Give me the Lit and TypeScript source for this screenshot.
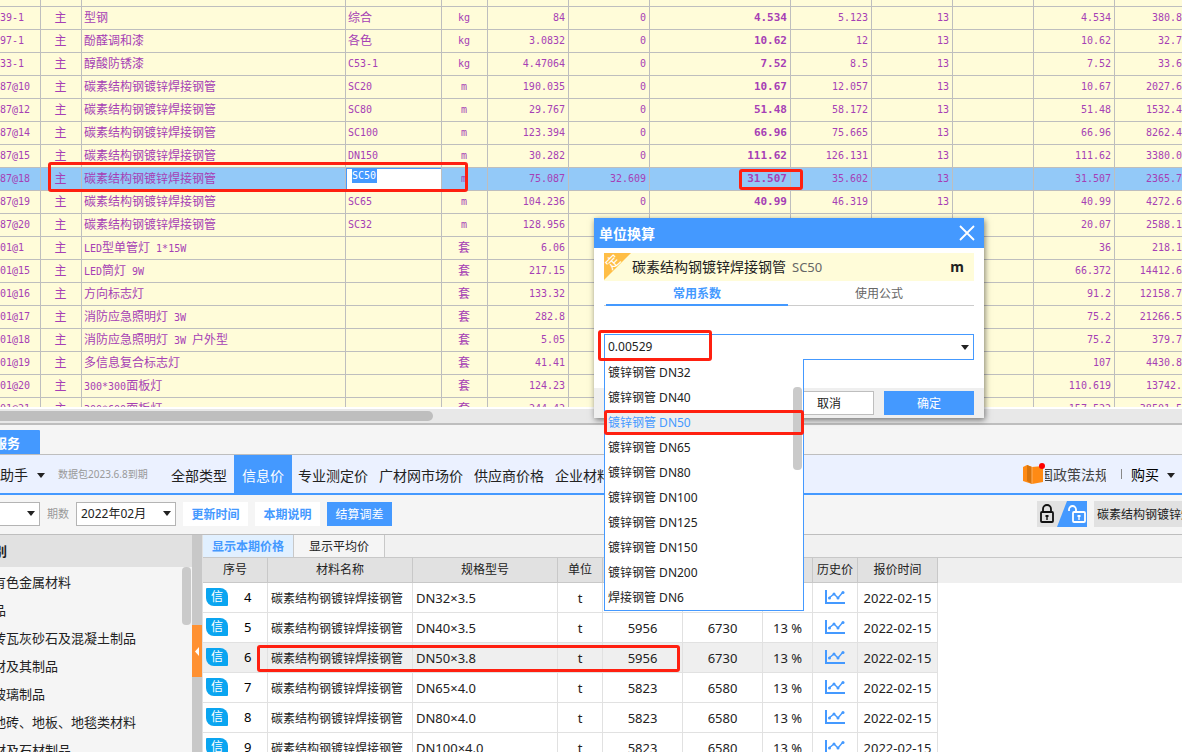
import { LitElement, html, css } from "lit";
import { customElement, state } from "lit/decorators.js";
import { classMap } from "lit/directives/class-map.js";

interface Material {
  code: string; name: string; spec: string; unit: string; qty: string; supplied: string;
  price: string; taxed: string; rate: string; market: string; total: string; selected?: boolean;
}

const PIPE = "碳素结构钢镀锌焊接钢管";

const m = (
  code: string, name: string, spec: string, unit: string, qty: string, supplied: string,
  price: string, taxed: string, rate: string, market: string, total: string, selected = false
): Material => ({ code, name, spec, unit, qty, supplied, price, taxed, rate, market, total, selected });

const MATERIALS: Material[] = [
  m("39-1", "型钢", "综合", "kg", "84", "0", "4.534", "5.123", "13", "4.534", "380.8"),
  m("97-1", "酚醛调和漆", "各色", "kg", "3.0832", "0", "10.62", "12", "13", "10.62", "32.7"),
  m("33-1", "醇酸防锈漆", "C53-1", "kg", "4.47064", "0", "7.52", "8.5", "13", "7.52", "33.6"),
  m("87@10", PIPE, "SC20", "m", "190.035", "0", "10.67", "12.057", "13", "10.67", "2027.6"),
  m("87@12", PIPE, "SC80", "m", "29.767", "0", "51.48", "58.172", "13", "51.48", "1532.4"),
  m("87@14", PIPE, "SC100", "m", "123.394", "0", "66.96", "75.665", "13", "66.96", "8262.4"),
  m("87@15", PIPE, "DN150", "m", "30.282", "0", "111.62", "126.131", "13", "111.62", "3380.0"),
  m("87@18", PIPE, "SC50", "m", "75.087", "32.609", "31.507", "35.602", "13", "31.507", "2365.7", true),
  m("87@19", PIPE, "SC65", "m", "104.236", "0", "40.99", "46.319", "13", "40.99", "4272.6"),
  m("87@20", PIPE, "SC32", "m", "128.956", "", "", "", "", "20.07", "2588.1"),
  m("01@1", "LED型单管灯 1*15W", "", "套", "6.06", "", "", "", "", "36", "218.1"),
  m("01@15", "LED筒灯 9W", "", "套", "217.15", "", "", "", "", "66.372", "14412.6"),
  m("01@16", "方向标志灯", "", "套", "133.32", "", "", "", "", "91.2", "12158.7"),
  m("01@17", "消防应急照明灯 3W", "", "套", "282.8", "", "", "", "", "75.2", "21266.5"),
  m("01@18", "消防应急照明灯 3W 户外型", "", "套", "5.05", "", "", "", "", "75.2", "379.7"),
  m("01@19", "多信息复合标志灯", "", "套", "41.41", "", "", "", "", "107", "4430.8"),
  m("01@20", "300*300面板灯", "", "套", "124.23", "", "", "", "", "110.619", "13742."),
  m("01@21", "300*600面板灯", "", "套", "244.42", "", "", "", "", "157.522", "38501.5"),
];

const QUOTES = [
  { no: 4, spec: "DN32×3.5", price: "", taxed: "", rate: "" },
  { no: 5, spec: "DN40×3.5", price: "5956", taxed: "6730", rate: "13 %" },
  { no: 6, spec: "DN50×3.8", price: "5956", taxed: "6730", rate: "13 %" },
  { no: 7, spec: "DN65×4.0", price: "5823", taxed: "6580", rate: "13 %" },
  { no: 8, spec: "DN80×4.0", price: "5823", taxed: "6580", rate: "13 %" },
  { no: 9, spec: "DN100×4.0", price: "5823", taxed: "6580", rate: "13 %" },
];

const CATEGORIES = [
  "有色金属材料", "品", "砖瓦灰砂石及混凝土制品", "材及其制品", "玻璃制品", "地砖、地板、地毯类材料", "材及石材制品",
];

const OPTIONS = [
  "镀锌钢管 DN32", "镀锌钢管 DN40", "镀锌钢管 DN50", "镀锌钢管 DN65", "镀锌钢管 DN80",
  "镀锌钢管 DN100", "镀锌钢管 DN125", "镀锌钢管 DN150", "镀锌钢管 DN200", "焊接钢管 DN6",
];

const NAV = ["全部类型", "信息价", "专业测定价", "广材网市场价", "供应商价格", "企业材料价"];

const caret = html`<svg class="caret" viewBox="0 0 8 5" aria-hidden="true"><path d="M0 0h8L4 5z" fill="#222" /></svg>`;

/* Latin runs are set a size smaller than the Chinese ones so both keep a half/full-width rhythm. */
const mixed = (text: string) =>
  text.split(/([\u4e00-\u9fff]+)/).filter(Boolean).map((part) =>
    /[\u4e00-\u9fff]/.test(part) ? html`<span class="han">${part}</span>` : part
  );

@customElement("material-grid")
export class MaterialGrid extends LitElement {
  static styles = css`
    :host { display: block; position: relative; height: 100%; overflow: hidden; background: #fffcd9; }
    table { width: 100%; table-layout: fixed; border-collapse: separate; border-spacing: 0; }
    td {
      height: 22px; padding: 0 3px 0 2px; border-right: 1px solid #bebebe; border-bottom: 1px solid #bebebe;
      font: 10px/18px "DejaVu Sans Mono", "Noto Sans CJK SC", monospace; color: #a63fb5;
      white-space: pre; overflow: hidden; text-align: right;
    }
    td:last-child { padding-right: 0; border-right: 0; }
    .stub td { height: 6px; line-height: 6px; }
    .han { font: 12px/18px "Noto Sans CJK SC", sans-serif; }
    td.left { text-align: left; }
    td.code { text-align: left; padding: 0; }
    td.mid { text-align: center; }
    td.price { font-weight: bold; font-size: 11px; }
    .selected td { background: #93c9f8; }
    .selected td.edit {
      background: #fff; padding: 0 0 0 6px; vertical-align: top; text-align: left; line-height: 14px;
      box-shadow: inset 1px 1px #4499ff;
    }
    .edit input {
      display: block; width: 25px; height: 14px; margin: 1px 0 0; padding: 0; border: 0; color: #fff;
      background: #4499ff; font: 10px/14px "DejaVu Sans Mono", monospace; outline: 0;
    }
    .c41 { width: 41px; } .c46 { width: 46px; } .c81 { width: 81px; } .c96 { width: 96px; }
    .c141 { width: 141px; } .c264 { width: 264px; }
    .mark { position: absolute; box-sizing: border-box; border: 3px solid #ff2010; border-radius: 3px; pointer-events: none; }
    .mark-row { left: 48px; top: 162px; width: 420px; height: 30px; }
    .mark-price { left: 739px; top: 169px; width: 64px; height: 21px; }
  `;

  render() {
    return html`
      <table aria-label="材料">
        <colgroup>
          <col class="c41" /><col class="c41" /><col class="c264" /><col class="c96" /><col class="c46" />
          <col class="c81" /><col class="c81" /><col class="c141" /><col class="c81" /><col class="c81" />
          <col class="c81" /><col class="c81" /><col />
        </colgroup>
        <tbody>
          <tr class="stub">${Array.from({ length: 13 }, () => html`<td></td>`)}</tr>
          ${MATERIALS.map((r) => html`
            <tr class=${classMap({ selected: !!r.selected })}>
              <td class="code">${r.code}</td>
              <td class="mid">${mixed("主")}</td>
              <td class="left">${mixed(r.name)}</td>
              ${r.selected
                ? html`<td class="edit"><input aria-label="规格型号" .value=${r.spec} /></td>`
                : html`<td class="left">${mixed(r.spec)}</td>`}
              <td class="mid">${mixed(r.unit)}</td>
              <td>${r.qty}</td>
              <td>${r.supplied}</td>
              <td class="price">${r.price}</td>
              <td>${r.taxed}</td>
              <td>${r.rate}</td>
              <td></td>
              <td>${r.market}</td>
              <td>${r.total}</td>
            </tr>`)}
        </tbody>
      </table>
      <div class="mark mark-row"></div>
      <div class="mark mark-price"></div>
    `;
  }
}

@customElement("unit-dialog")
export class UnitDialog extends LitElement {
  @state() private picked = "镀锌钢管 DN50";

  static styles = css`
    :host {
      display: flex; flex-direction: column; background: #fff; color: #222;
      box-shadow: 1px 2px 6px rgba(0, 0, 0, 0.5); font: 12px/16px "Noto Sans", "Noto Sans CJK SC", sans-serif;
    }
    button, input { font: inherit; color: inherit; margin: 0; padding: 0; border: 0; background: none; border-radius: 0; }
    header {
      display: flex; align-items: center; justify-content: space-between; height: 30px; padding: 0 9px 0 5px;
      background: #4499ff; color: #fff; box-sizing: border-box;
    }
    h2 { margin: 0; font: bold 14px/30px "Noto Sans CJK SC", sans-serif; }
    .close { width: 16px; height: 16px; }
    .close svg, .ribbon { display: block; }
    .item {
      display: flex; align-items: center; height: 28px; margin: 5px 10px 0; background: #fffcd9; padding-right: 10px;
    }
    .item .name { margin: 0 6px 0 1px; font-size: 14px; }
    .item .spec { flex: 1; color: #666; font-size: 13px; }
    .item b { font-size: 14px; }
    .tabs { display: flex; margin: 0 10px; border-bottom: 1px solid #ccc; height: 24px; padding: 0 4px 0 2px; }
    .tabs button { flex: 1; color: #666; height: 25px; box-sizing: border-box; padding: 2px 0 0; border-bottom: 2px solid transparent; }
    .tabs .on { color: #4499ff; font-weight: bold; border-bottom-color: #4499ff; }
    .combo {
      position: relative; display: flex; align-items: center; margin: 28px 10px 28px; height: 24px;
      border: 1px solid #4499ff; padding-right: 4px;
    }
    .combo input { flex: 1; min-width: 0; padding-left: 3px; font-size: 12px; outline: 0; }
    .combo .open { width: 8px; height: 16px; display: flex; align-items: center; }
    .caret { width: 8px; height: 5px; }
    .popup {
      position: absolute; left: -1px; top: 24px; width: 198px; padding-top: 1px;
      background: #fff; border: 1px solid #4499ff; border-top: 0;
    }
    ul { margin: 0; padding: 0; list-style: none; }
    li button { display: block; width: 100%; height: 25px; padding-left: 3px; text-align: left; }
    li.on { background: #efefef; color: #4499ff; }
    .thumb { position: absolute; right: 1px; top: 28px; width: 9px; height: 83px; border-radius: 4px; background: #cacaca; }
    footer {
      display: flex; justify-content: flex-end; align-items: center; gap: 10px; height: 30px; padding: 0 10px; background: #efefef;
    }
    footer button { width: 90px; height: 24px; box-sizing: border-box; padding-top: 2px; }
    .cancel { background: #fff; border: 1px solid #bebebe; }
    .ok { background: #4499ff; color: #fff; }
    .mark { position: absolute; box-sizing: border-box; border: 3px solid #ff2010; border-radius: 3px; pointer-events: none; }
    .mark-value { left: -7px; top: -5px; width: 114px; height: 31px; }
    .mark-option { left: -1px; top: 51px; width: 200px; height: 25px; }
  `;

  render() {
    return html`
      <header>
        <h2>单位换算</h2>
        <button class="close" aria-label="关闭">
          <svg width="16" height="16" viewBox="0 0 16 16"><path d="M1 1l14 14M15 1L1 15" stroke="#fff" stroke-width="1.8" fill="none" /></svg>
        </button>
      </header>
      <div class="item">
        <svg class="ribbon" width="27" height="28" viewBox="0 0 27 28">
          <path d="M0 0h27L0 27z" fill="#ffbe46" />
          <text x="9" y="14" transform="rotate(-45 9 9)" text-anchor="middle" font-size="14" fill="#fff">定</text>
        </svg>
        <span class="name">${PIPE}</span><span class="spec">SC50</span><b>m</b>
      </div>
      <div class="tabs">
        <button class="on">常用系数</button><button>使用公式</button>
      </div>
      <div class="combo">
        <input aria-label="换算系数" value="0.00529" />
        <button class="open" aria-label="展开">${caret}</button>
        <div class="popup">
          <ul>
            ${OPTIONS.map((o) => html`<li class=${classMap({ on: o === this.picked })}>
              <button @click=${() => (this.picked = o)}>${o}</button></li>`)}
          </ul>
          <div class="thumb"></div>
          <div class="mark mark-option"></div>
        </div>
        <div class="mark mark-value"></div>
      </div>
      <footer><button class="cancel">取消</button><button class="ok">确定</button></footer>
    `;
  }
}

@customElement("price-panel")
export class PricePanel extends LitElement {
  @state() private nav = "信息价";

  static styles = css`
    :host {
      display: flex; flex-direction: column; height: 100%; background: #f5f5f5; color: #222; overflow: hidden;
      font: 12px/16px "Noto Sans", "Noto Sans CJK SC", sans-serif;
    }
    button, select, input { font: inherit; color: inherit; margin: 0; padding: 0; border: 0; background: none; border-radius: 0; }
    .strip { height: 29px; flex: none; display: flex; align-items: flex-end; border-bottom: 1px solid #bebebe; }
    .strip button {
      width: 40px; height: 24px; background: #4499ff; color: #fff; font-weight: bold; font-size: 13px;
      border-radius: 0 1px 0 0; text-align: left; overflow: hidden; text-indent: -6px; padding-top: 2px;
    }
    nav {
      flex: none; display: flex; align-items: center; height: 38px; background: #ebf1ff; border-bottom: 2px solid #4499ff;
      font-size: 14px; white-space: nowrap;
    }
    .helper { display: flex; align-items: center; gap: 9px; width: 58px; padding-top: 2px; }
    .caret { width: 8px; height: 5px; flex: none; }
    .expiry { width: 110px; color: #999; font-size: 10px; }
    .links { flex: 1; min-width: 0; display: flex; overflow: hidden; height: 38px; }
    .links button { padding: 4px 5px 0 6px; height: 38px; flex: none; }
    .links button:first-child { padding: 4px 7px 0 3px; }
    .links .on { background: #4499ff; color: #fff; padding: 4px 8px 0; }
    .law { display: flex; align-items: center; }
    .law span { width: 61px; overflow: hidden; text-indent: -6px; color: #444; line-height: 20px; padding-top: 2px; }
    .sep { width: 1px; height: 10px; background: #888; margin: 0 9px 0 15px; }
    .buy { display: flex; align-items: center; gap: 8px; color: #000; padding: 2px 7px 0 0; }
    .tools {
      flex: none; height: 38px; display: flex; align-items: center; border-bottom: 1px solid #bebebe; padding: 0 0 1px; overflow: hidden;
    }
    .pick { position: relative; display: flex; align-items: center; height: 24px; box-sizing: border-box; border: 1px solid #b4b4b4; background: #fff; }
    .pick select { appearance: none; width: 100%; height: 22px; padding-left: 4px; outline: 0; }
    .pick .caret { position: absolute; right: 4px; top: 8px; }
    .area { width: 40px; border-left: 0; }
    .period { width: 100px; margin-right: 7px; }
    .label { width: 36px; padding-left: 7px; box-sizing: border-box; color: #999; font-size: 11px; }
    .act { width: 65px; height: 24px; margin-right: 7px; padding-top: 2px; background: #fff; color: #4499ff; font-weight: bold; }
    .act.fill { background: #4499ff; color: #fff; font-weight: normal; }
    .space { flex: 1; }
    .lock { display: block; width: 50px; height: 26px; margin-right: 7px; }
    .lock svg { display: block; }
    .keyword { width: 85px; height: 26px; padding-left: 3px; background: #e1e1e1; }
    .body { flex: 1; min-height: 0; display: flex; overflow: hidden; }
    aside { width: 192px; flex: none; position: relative; }
    aside h3 { margin: 0; height: 32px; background: #e1e1e1; font: bold 13px/32px "Noto Sans CJK SC", sans-serif; text-indent: -6px; }
    aside ul { margin: 0; padding: 1px 0 0; list-style: none; font-size: 13px; }
    aside li { height: 28px; line-height: 28px; text-indent: -7px; white-space: nowrap; }
    .thumb { position: absolute; right: 1px; top: 32px; width: 9px; height: 58px; border-radius: 4px; background: #cacaca; }
    .split { width: 10px; flex: none; background: #c8c8c8; padding-top: 90px; box-sizing: border-box; }
    .split button { width: 10px; height: 52px; background: #ff9132; display: flex; align-items: center; padding-left: 3px; box-sizing: border-box; }
    .quotes { position: relative; flex: 1; min-width: 0; background: #fff; border-left: 1px solid #e1e1e1; overflow: hidden; }
    .views { display: flex; height: 22px; background: #f1f1f1; border-bottom: 1px solid #c8c8c8; }
    .views button { width: 91px; border-right: 1px solid #c8c8c8; height: 22px; background: #f5f5f5; padding-top: 2px; }
    .views .on { background: #e1f0ff; color: #4499ff; font-weight: bold; }
    .head { background: #efefef; }
    table { table-layout: fixed; width: 735px; border-collapse: separate; border-spacing: 0; }
    th { height: 24px; padding: 0; background: #e1e1e1; border-right: 1px solid #c8c8c8; border-bottom: 1px solid #c8c8c8; font-weight: normal; }
    td { height: 29px; padding: 0; border-right: 1px solid #e1e1e1; border-bottom: 1px solid #e1e1e1; text-align: center; white-space: nowrap; }
    td.left { text-align: left; padding-left: 3px; }
    td.name { padding-top: 2px; height: 27px; }
    .num { font-size: 13px; color: #222; }
    .hit td { background: #efefef; }
    .no { display: flex; align-items: center; gap: 16px; padding: 0 0 2px 3px; font-size: 13px; color: #000; }
    .tag { display: block; width: 22px; height: 18px; border-radius: 1px 8px 1px 8px; background: #0aa5f0; color: #fff; font-size: 12px; line-height: 18px; text-align: center; }
    td svg { display: block; margin: 0 auto; }
    .w65 { width: 65px; } .w145 { width: 145px; } .w45 { width: 45px; } .w80 { width: 80px; } .w50 { width: 50px; }
    .mark { position: absolute; left: 54px; top: 110px; width: 423px; height: 27px; box-sizing: border-box; border: 3px solid #ff2010; border-radius: 3px; pointer-events: none; }
  `;

  render() {
    return html`
      <div class="strip"><button>服务</button></div>
      <nav>
        <button class="helper">助手${caret}</button>
        <span class="expiry">数据包2023.6.8到期</span>
        <div class="links">
          ${NAV.map((n) => html`<button class=${classMap({ on: n === this.nav })} @click=${() => (this.nav = n)}>${n}</button>`)}
        </div>
        <button class="law">
          <svg width="24" height="22" viewBox="0 0 24 22">
            <path d="M2 4l4-2 5 2 11-1v16l-11 2-9-3z" fill="#ff8a14" />
            <path d="M6 2l5 2v17l-5-3z" fill="#d8740c" />
            <path d="M11 4v17" stroke="#ffb060" stroke-width="1" />
            <circle cx="21" cy="3" r="3" fill="#f00" />
          </svg>
          <span>国政策法规</span>
        </button>
        <i class="sep"></i>
        <button class="buy">购买${caret}</button>
      </nav>
      <div class="tools">
        <div class="pick area"><select aria-label="地区"><option></option></select>${caret}</div>
        <label class="label" for="period">期数</label>
        <div class="pick period"><select id="period"><option>2022年02月</option></select>${caret}</div>
        <button class="act">更新时间</button>
        <button class="act">本期说明</button>
        <button class="act fill">结算调差</button>
        <span class="space"></span>
        <button class="lock" aria-label="锁定">
          <svg width="50" height="26" viewBox="0 0 50 26">
            <path d="M0 0h50v26H0z" fill="#e1e1e1" /><path d="M30 0h20v26H20z" fill="#4499ff" />
            <g fill="none" stroke="#111" stroke-width="1.8">
              <rect x="4" y="11" width="12" height="10" rx="1" /><path d="M6 11V8a4 4 0 0 1 8 0v3" />
            </g>
            <path d="M8.500 14h3v2h-.8v3h-1.400v-3h-.8z" fill="#111" />
            <g fill="none" stroke="#fff" stroke-width="1.8">
              <rect x="36" y="11" width="12" height="10" rx="1" /><path d="M32 10V8.500a3.500 3.500 0 0 1 7 0V11" />
            </g>
            <path d="M40.500 14h3v2h-.8v3h-1.400v-3h-.8z" fill="#fff" />
          </svg>
        </button>
        <input class="keyword" aria-label="关键字" .value=${PIPE} />
      </div>
      <div class="body">
        <aside>
          <h3>别</h3>
          <ul>${CATEGORIES.map((c) => html`<li>${c}</li>`)}</ul>
          <div class="thumb"></div>
        </aside>
        <div class="split">
          <button aria-label="收起"><svg width="4" height="9" viewBox="0 0 4 9"><path d="M4 0v9L0 4.500z" fill="#fff" /></svg></button>
        </div>
        <section class="quotes">
          <div class="views"><button class="on">显示本期价格</button><button>显示平均价</button></div>
          <div class="head">
            <table aria-label="信息价">
              <colgroup>
                <col class="w65" /><col class="w145" /><col class="w145" /><col class="w45" /><col class="w80" />
                <col class="w80" /><col class="w50" /><col class="w45" /><col class="w80" />
              </colgroup>
              <thead><tr>
                <th>序号</th><th>材料名称</th><th>规格型号</th><th>单位</th><th></th><th></th><th></th><th>历史价</th><th>报价时间</th>
              </tr></thead>
            </table>
          </div>
          <table aria-label="信息价明细">
            <colgroup>
              <col class="w65" /><col class="w145" /><col class="w145" /><col class="w45" /><col class="w80" />
              <col class="w80" /><col class="w50" /><col class="w45" /><col class="w80" />
            </colgroup>
            <tbody>
              ${QUOTES.map((q) => html`
                <tr class=${classMap({ hit: q.no === 6 })}>
                  <td><div class="no"><span class="tag">信</span>${q.no}</div></td>
                  <td class="left name">${PIPE}</td>
                  <td class="left num">${q.spec}</td>
                  <td class="num">t</td>
                  <td class="num">${q.price}</td>
                  <td class="num">${q.taxed}</td>
                  <td class="num">${q.rate}</td>
                  <td>
                    <svg width="20" height="16" viewBox="0 0 20 16">
                      <path d="M1 0v13h19" fill="none" stroke="#4499ff" stroke-width="2" />
                      <path d="M4 8l5-4 4 4 5-6" fill="none" stroke="#4499ff" stroke-width="1.400" />
                      <g fill="#4499ff"><circle cx="4.500" cy="8" r="1.500" /><circle cx="9" cy="4" r="1.500" /><circle cx="13" cy="8" r="1.500" /><circle cx="18" cy="2.500" r="1.500" /></g>
                    </svg>
                  </td>
                  <td class="num">2022-02-15</td>
                </tr>`)}
            </tbody>
          </table>
          <div class="mark"></div>
        </section>
      </div>
    `;
  }
}

@customElement("app-root")
export class AppRoot extends LitElement {
  static styles = css`
    :host { display: flex; flex-direction: column; height: 100vh; position: relative; overflow: hidden; background: #f5f5f5; }
    .top { flex: none; height: 407px; }
    .scroll {
      flex: none; height: 18px; box-sizing: border-box; padding: 2px 0; background: #e8e8e8;
      border-top: 2px solid #fff; border-bottom: 2px solid #bebebe;
    }
    .scroll div { width: 433px; height: 10px; background: #bebebe; border-radius: 0 5px 5px 0; }
    .bottom { flex: 1; min-height: 0; }
    unit-dialog { position: absolute; left: 594px; top: 218px; width: 390px; }
  `;

  render() {
    return html`
      <div class="top"><material-grid></material-grid></div>
      <div class="scroll"><div></div></div>
      <div class="bottom"><price-panel></price-panel></div>
      <unit-dialog role="dialog" aria-label="单位换算"></unit-dialog>
    `;
  }
}
